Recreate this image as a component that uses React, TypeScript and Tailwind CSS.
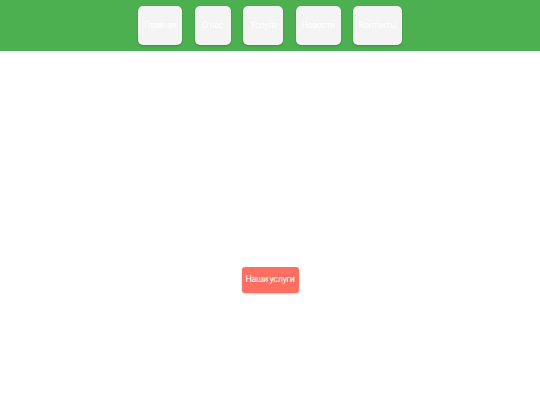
const links = [
  { label: 'Главная', w: 'w-[44px]' },
  { label: 'О нас', w: 'w-[36px]' },
  { label: 'Услуги', w: 'w-[40px]' },
  { label: 'Новости', w: 'w-[45px]' },
  { label: 'Контакты', w: 'w-[49px]' },
];

export default function App() {
  return (
    <div
      className="min-h-[405px] bg-white"
      style={{ fontFamily: '"Roboto", "Liberation Sans", sans-serif' }}
    >
      <header className="h-[51px] bg-[#4caf50] flex items-start justify-center gap-[12.5px] pt-[6px]">
        {links.map((l) => (
          <a
            key={l.label}
            className={`${l.w} h-[39px] flex items-center justify-center whitespace-nowrap bg-[#f4f4f4] rounded-[5px] text-white text-[9px] tracking-[-0.4px] shadow-[0_1px_2px_rgba(0,0,0,0.2)]`}
          >
            {l.label}
          </a>
        ))}
      </header>
      <main className="flex justify-center pt-[216px]">
        <button className="w-[57px] h-[26px] flex items-center justify-center whitespace-nowrap bg-[#ff6f61] text-white text-[9px] tracking-[-0.4px] rounded-[3px] shadow-[0_1px_2px_rgba(0,0,0,0.15)]">
          Наши услуги
        </button>
      </main>
    </div>
  );
}
